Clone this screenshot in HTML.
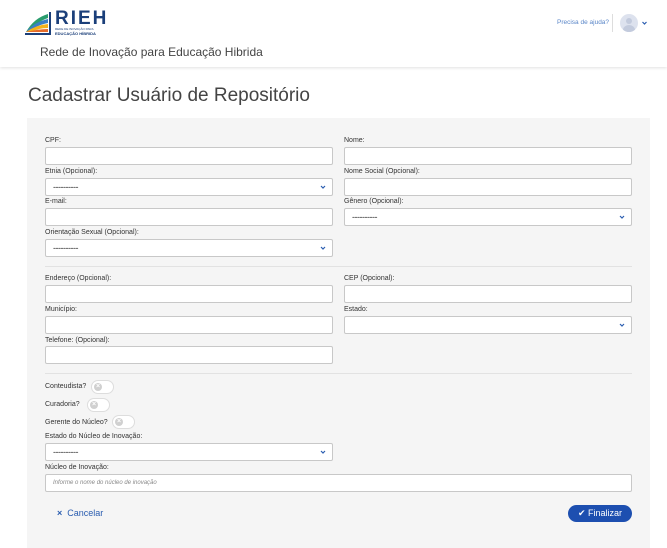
<!DOCTYPE html>
<html><head><meta charset="utf-8"><style>
*{box-sizing:border-box;margin:0;padding:0}
body{width:667px;height:539px;background:#fff;font-family:"Liberation Sans",sans-serif;position:relative;overflow:hidden;color:#333}
.a{position:absolute}
.hdr{left:0;top:0;width:667px;height:67px;background:#fff;box-shadow:0 1px 3px rgba(0,0,0,.12)}
.panel{left:27px;top:118px;width:623px;height:430px;background:#f5f5f5}
.l{position:absolute;font-size:7px;color:#333}
.i{position:absolute;height:18px;background:#fff;border:1px solid #c8c8c8;border-radius:2px}
.s .d{position:absolute;left:7px;top:3px;font-size:9px;color:#333;letter-spacing:-.5px}
.s svg{position:absolute;right:6px;top:6px}
.hr{position:absolute;left:45px;width:587px;height:1px;background:#e2e2e2}
.tg{position:absolute;width:23px;height:14px;border:1px solid #ddd;border-radius:7px;background:#fff}
.tg:before{content:"×";position:absolute;left:2px;top:2px;width:8px;height:8px;border-radius:50%;background:#d0d0d0;color:#fff;font-size:7px;line-height:8px;text-align:center;font-weight:bold}
</style></head><body>
<div class="a hdr"></div>
<svg class="a" style="left:24px;top:10px" width="28" height="26" viewBox="0 0 28 26">
<path d="M2 22 Q10 8 24 4 L24 8 Q12 12 6 22Z" fill="#2a9d6e"/>
<path d="M2 22 Q10 12 24 9 L24 13 Q12 15 7 22Z" fill="#3a7fc4"/>
<path d="M2 22 Q12 15 24 14 L24 18 Q14 18 8 22Z" fill="#f3b21b"/>
<path d="M2 22 Q14 19 24 19 L24 22Z" fill="#e56b2a"/>
<rect x="1" y="23" width="24" height="2" fill="#1b3f7a"/>
<rect x="25" y="2" width="2" height="23" fill="#1b3f7a"/>
</svg>
<div class="a" style="left:55px;top:8px;font-size:19px;font-weight:bold;color:#1b3f7a;letter-spacing:2px">RIEH</div>
<div class="a" style="left:55px;top:27px;font-size:3px;color:#1b3f7a">REDE DE INOVAÇÃO PARA</div>
<div class="a" style="left:55px;top:31px;font-size:4px;font-weight:bold;color:#1b3f7a">EDUCAÇÃO HÍBRIDA</div>
<div class="a" style="left:40px;top:45px;font-size:12px;color:#444">Rede de Inovação para Educação Hibrida</div>
<div class="a" style="left:557px;top:19px;font-size:6.5px;color:#5a86c8">Precisa de ajuda?</div>
<div class="a" style="left:612px;top:14px;width:1px;height:18px;background:#ddd"></div>
<div class="a" style="left:620px;top:14px;width:18px;height:18px;border-radius:50%;background:#dde2ee;overflow:hidden"><div class="a" style="left:6px;top:4px;width:6px;height:6px;border-radius:50%;background:#c3cbdd"></div><div class="a" style="left:3px;top:11px;width:12px;height:10px;border-radius:50%;background:#c3cbdd"></div></div>
<svg class="a" style="left:642px;top:21px" width="5" height="4" viewBox="0 0 5 4"><path d="M0.5 1 L2.5 3 L4.5 1" stroke="#2a5db0" stroke-width="1.2" fill="none"/></svg>
<div class="a" style="left:28px;top:85px;font-size:19px;color:#444;font-weight:300">Cadastrar Usuário de Repositório</div>
<div class="a panel"></div>

<div class="l" style="left:45px;top:137px">CPF:</div><div class="i" style="left:45px;top:147px;width:288px"></div>
<div class="l" style="left:344px;top:137px">Nome:</div><div class="i" style="left:344px;top:147px;width:288px"></div>
<div class="l" style="left:45px;top:168px">Etnia (Opcional):</div><div class="i s" style="left:45px;top:178px;width:288px"><span class="d">----------</span><svg width="6" height="4" viewBox="0 0 6 4"><path d="M1 1 L3 3 L5 1" stroke="#2a5db0" stroke-width="1.2" fill="none"/></svg></div>
<div class="l" style="left:344px;top:168px">Nome Social (Opcional):</div><div class="i" style="left:344px;top:178px;width:288px"></div>
<div class="l" style="left:45px;top:198px">E-mail:</div><div class="i" style="left:45px;top:208px;width:288px"></div>
<div class="l" style="left:344px;top:198px">Gênero (Opcional):</div><div class="i s" style="left:344px;top:208px;width:288px"><span class="d">----------</span><svg width="6" height="4" viewBox="0 0 6 4"><path d="M1 1 L3 3 L5 1" stroke="#2a5db0" stroke-width="1.2" fill="none"/></svg></div>
<div class="l" style="left:45px;top:229px">Orientação Sexual (Opcional):</div><div class="i s" style="left:45px;top:239px;width:288px"><span class="d">----------</span><svg width="6" height="4" viewBox="0 0 6 4"><path d="M1 1 L3 3 L5 1" stroke="#2a5db0" stroke-width="1.2" fill="none"/></svg></div>
<div class="hr" style="top:266px"></div>
<div class="l" style="left:45px;top:275px">Endereço (Opcional):</div><div class="i" style="left:45px;top:285px;width:288px"></div>
<div class="l" style="left:344px;top:275px">CEP (Opcional):</div><div class="i" style="left:344px;top:285px;width:288px"></div>
<div class="l" style="left:45px;top:306px">Município:</div><div class="i" style="left:45px;top:316px;width:288px"></div>
<div class="l" style="left:344px;top:306px">Estado:</div><div class="i s" style="left:344px;top:316px;width:288px"><svg width="6" height="4" viewBox="0 0 6 4"><path d="M1 1 L3 3 L5 1" stroke="#2a5db0" stroke-width="1.2" fill="none"/></svg></div>
<div class="l" style="left:45px;top:337px">Telefone: (Opcional):</div><div class="i" style="left:45px;top:346px;width:288px"></div>
<div class="hr" style="top:373px"></div>
<div class="l" style="left:45px;top:383px">Conteudista?</div><div class="tg" style="left:91px;top:380px"></div>
<div class="l" style="left:45px;top:401px">Curadoria?</div><div class="tg" style="left:87px;top:398px"></div>
<div class="l" style="left:45px;top:419px">Gerente do Núcleo?</div><div class="tg" style="left:112px;top:415px"></div>
<div class="l" style="left:45px;top:433px">Estado do Núcleo de Inovação:</div><div class="i s" style="left:45px;top:443px;width:288px"><span class="d">----------</span><svg width="6" height="4" viewBox="0 0 6 4"><path d="M1 1 L3 3 L5 1" stroke="#2a5db0" stroke-width="1.2" fill="none"/></svg></div>
<div class="l" style="left:45px;top:464px">Núcleo de Inovação:</div><div class="i" style="left:45px;top:474px;width:587px"><span style="position:absolute;left:7px;top:5px;font-size:6px;font-style:italic;color:#888">Informe o nome do núcleo de inovação</span></div>
<div class="a" style="left:57px;top:508px;font-size:9px;color:#2a5db0"><b>×</b>&nbsp; Cancelar</div>
<div class="a" style="left:568px;top:505px;width:64px;height:17px;border-radius:9px;background:#1d4fb0;color:#fff;font-size:9px;line-height:17px;text-align:center">✔ Finalizar</div>
</body></html>
